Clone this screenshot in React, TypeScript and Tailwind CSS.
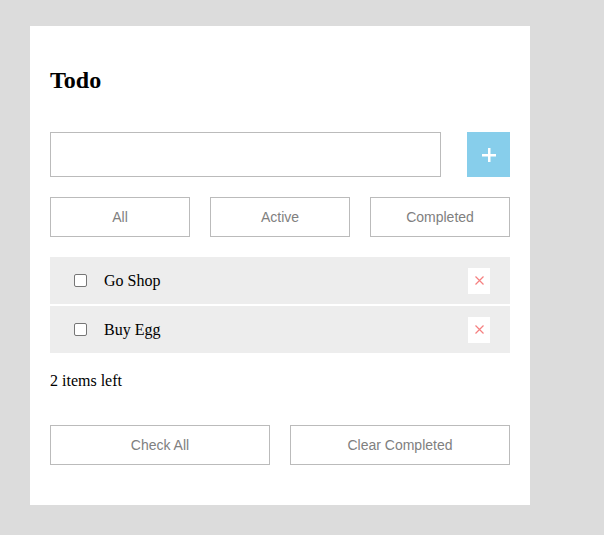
import React from "react";

const items = ["Go Shop", "Buy Egg"];

export default function App() {
  return (
    <div className="min-h-[535px] w-full bg-[#dcdcdc] pt-[26px] pl-[30px]">
      <div className="w-[500px] bg-white px-[20px] pt-[40px] pb-[40px]" style={{ fontFamily: '"Liberation Serif", serif' }}>
        <h2 className="m-0 h-[28px] text-[24px] font-bold leading-[28px] text-black">Todo</h2>
        <div className="mt-[38px] flex justify-between">
          <input className="h-[45px] w-[391px] border border-[#bbbbbb] bg-white outline-none" />
          <button className="flex h-[45px] w-[43px] items-center justify-center bg-[#87ceeb]">
            <svg width="14" height="14" viewBox="0 0 14 14">
              <rect x="6" y="0" width="2.5" height="14" fill="white" />
              <rect x="0" y="6" width="14" height="2.5" fill="white" />
            </svg>
          </button>
        </div>
        <div className="mt-[20px] flex gap-[20px]" style={{ fontFamily: '"Liberation Sans", Arial, sans-serif' }}>
          {["All", "Active", "Completed"].map((t) => (
            <button key={t} className="h-[40px] w-[140px] border border-[#bbbbbb] bg-white text-[14px] text-[#808080]">
              {t}
            </button>
          ))}
        </div>
        <div className="mt-[20px] flex flex-col gap-[2px]">
          {items.map((t) => (
            <div key={t} className="flex h-[47px] items-center bg-[#ededed] pl-[24px] pr-[20px]">
              <span className="box-border h-[13px] w-[13px] rounded-[2px] border border-[#767676] bg-white" />
              <span className="ml-[17px] flex-1 text-[16px] text-black">{t}</span>
              <span className="flex h-[26px] w-[22px] items-center justify-center bg-white">
                <svg width="9" height="9" viewBox="0 0 9 9">
                  <path d="M0.5 0.5 L8.5 8.5 M8.5 0.5 L0.5 8.5" stroke="#f58080" strokeWidth="1.2" />
                </svg>
              </span>
            </div>
          ))}
        </div>
        <div className="mt-[19px] h-[18px] text-[16px] leading-[18px] text-black">2 items left</div>
        <div className="mt-[35px] flex gap-[20px]" style={{ fontFamily: '"Liberation Sans", Arial, sans-serif' }}>
          {["Check All", "Clear Completed"].map((t) => (
            <button key={t} className="h-[40px] w-[220px] border border-[#bbbbbb] bg-white text-[14px] text-[#808080]">
              {t}
            </button>
          ))}
        </div>
      </div>
    </div>
  );
}
